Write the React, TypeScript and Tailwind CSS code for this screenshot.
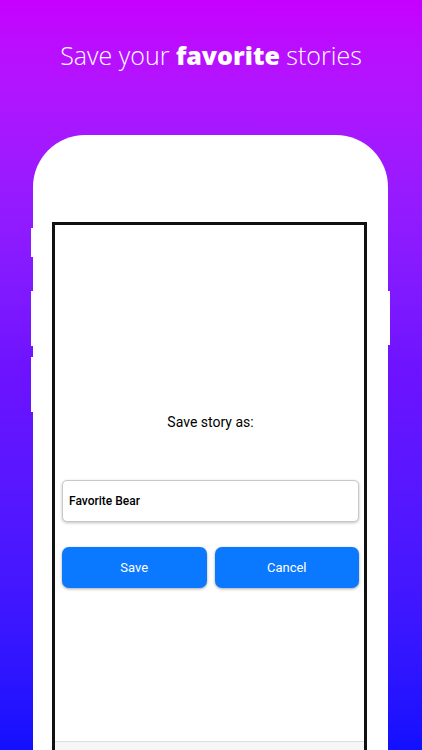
import React, { useState } from "react";

const SaveDialog = () => {
  const [name, setName] = useState("Favorite Bear");

  return (
    <div className="flex flex-col items-stretch pl-[7px] pr-[5px] pt-[188px] font-['Roboto','Inter',sans-serif]">
      <p className="text-center text-[14px] leading-[18px] text-black">
        Save story as:
      </p>
      <input
        value={name}
        onChange={(e) => setName(e.target.value)}
        className="mt-[49px] h-[42px] rounded-[5px] border border-[#c8c8c8] bg-white px-[6px] text-[12px] font-medium text-black shadow-[0_1px_3px_rgba(0,0,0,0.25)] outline-none"
      />
      <div className="mt-[25px] grid grid-cols-2 gap-[8px]">
        <button className="h-[41px] rounded-[7px] bg-[#0a78ff] text-[13px] text-white shadow-[0_1px_3px_rgba(0,0,0,0.35)]">
          Save
        </button>
        <button className="h-[41px] rounded-[7px] bg-[#0a78ff] text-[13px] text-white shadow-[0_1px_3px_rgba(0,0,0,0.35)]">
          Cancel
        </button>
      </div>
      <div className="mt-[153px] -ml-[7px] -mr-[5px] h-[20px] border-t border-[#dcdcdc] bg-[#f6f6f6]"></div>
    </div>
  );
};

const App = () => {
  return (
    <div className="h-[750px] w-[422px] overflow-hidden bg-gradient-to-b from-[#c600ff] via-[#6c12ff] to-[#1010ff]">
      <h1 className="pt-[38px] text-center font-['Open_Sans',sans-serif] text-[25px] font-light leading-[34px] text-white">
        Save your <span className="font-extrabold">favorite</span> stories
      </h1>

      {/* phone body */}
      <div className="relative ml-[33px] mt-[63px] h-[700px] w-[355px] rounded-t-[52px] bg-white pl-[19px] pr-[21px] pt-[87px]">
        {/* side buttons */}
        <div className="absolute -left-[2px] top-[93px] h-[29px] w-[2px] bg-white"></div>
        <div className="absolute -left-[2px] top-[156px] h-[55px] w-[2px] bg-white"></div>
        <div className="absolute -left-[2px] top-[222px] h-[55px] w-[2px] bg-white"></div>
        <div className="absolute -right-[2px] top-[156px] h-[54px] w-[2px] bg-white"></div>

        <div className="h-[600px] border-[3px] border-b-0 border-[#111]">
          <SaveDialog />
        </div>
      </div>
    </div>
  );
};

export default App;
